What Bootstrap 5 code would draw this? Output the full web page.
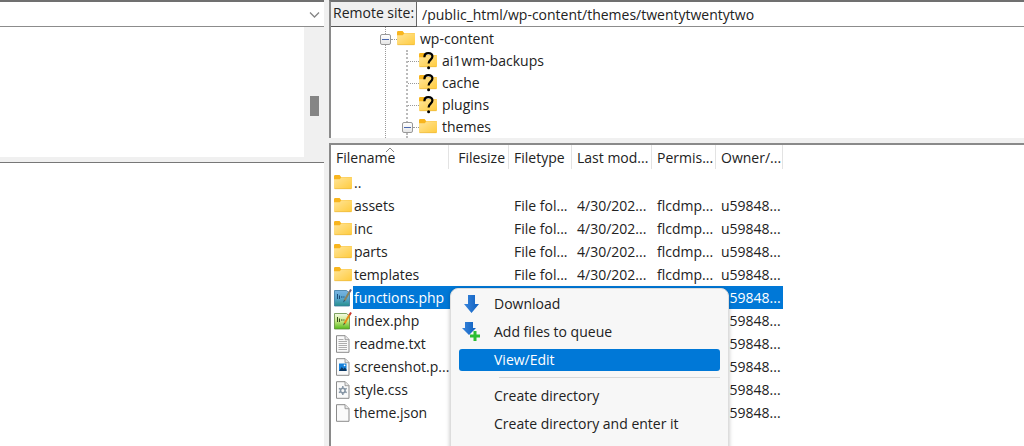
<!DOCTYPE html>
<html lang="en">
<head>
<meta charset="utf-8">
<meta name="viewport" content="width=device-width, initial-scale=1">
<title>Remote files</title>
<link href="https://cdn.jsdelivr.net/npm/bootstrap@5.3.0/dist/css/bootstrap.min.css" rel="stylesheet">
<style>
  body { font-family: "Open Sans", "Noto Sans", sans-serif; font-size: 14px; line-height: 22px; color: #222; background: #f0f0f0; }
  .local-side { flex: 0 0 324px; }
  .remote-side { padding-left: 5px; min-width: 0; }
  .pathbar { height: 27px; border-top: 2px solid #707070; border-bottom: 1px solid #8c8c8c; background: #fff; }
  .pathbar .form-select, .pathbar .form-control { font-size: 14px; line-height: 22px; border: 0; border-radius: 0; color: #222; box-shadow: none; background-color: #fff; }
  .pathbar .form-select { background-position: right 4px center; background-size: 11px 11px;
    background-image: url("data:image/svg+xml,%3csvg xmlns='http://www.w3.org/2000/svg' viewBox='0 0 11 11'%3e%3cpath d='M1 3.5l4.5 4.5L10 3.5' fill='none' stroke='%23858585' stroke-width='1.3'/%3e%3c/svg%3e"); }
  .pathbar label { flex: none; background: #f0f0f0; border-right: 1px solid #666; box-shadow: 0 1px #555; width: 86px; padding-left: 2px; white-space: nowrap; }
  .pathbar .form-control { padding: 0 8px 0 5px; }
  .local-tree { flex: 0 0 130px; }
  .track { width: 20px; background: #f0f0f0; padding-top: 69px; }
  .thumb { width: 9px; height: 20px; background: #858585; }
  .local-list { margin-top: 5px; border-top: 1px solid #777; }
  .remote-pane { border-left: 2px solid #8a8a8a; background: #fff; }
  .remote-tree { flex: 0 0 111px; }
  .remote-list { margin-top: 5px; border-top: 2px solid #8a8a8a; }

  .tree-root { margin-left: 54px; padding-top: 1px; height: 100%; border-left: 1px dotted #999; }
  .tree-sub { margin-left: 20px; border-left: 2px dotted #bbb; }
  .node { height: 22px; }
  .node span { padding-left: 5px; }
  .twig { width: 6px; border-top: 1px dotted #999; }
  .twig-long { width: 11px; }
  .toggle { width: 11px; height: 11px; margin-left: -6px; padding: 0; border: 1px solid #999; border-radius: 2px; background: linear-gradient(#fff, #e6e6e6); }
  .toggle svg { display: block; }
  .ico { width: 18px; height: 18px; flex: none; }

  .files { width: 452px; table-layout: fixed; border-collapse: collapse; }
  .files th { height: 26px; font-weight: 400; padding: 0 0 0 5px; white-space: nowrap;
    background: linear-gradient(#e3e3e3, #e3e3e3) right top / 1px 24px no-repeat; }
  .files td { height: 23px; padding: 0 0 0 5px; white-space: nowrap; }
  .files td:first-child { padding-left: 3px; }
  .files .ico { margin-right: 2px; }
  .sort-mark { left: 54px; top: 2px; }
  .picked td { background: #0078d7; color: #fff; }
  .picked td:first-child { background: linear-gradient(#fff, #fff) left / 22px 100% no-repeat #0078d7; }

  .ctx { left: 119px; top: 143px; bottom: -12px; width: 279px; padding: 4px 8px; gap: 6px; background: #f7f7f7; border: 1px solid #ddd; border-radius: 8px; box-shadow: 0 1px 4px rgba(0,0,0,.25); }
  .ctx button { height: 22px; border: 0; border-radius: 3px; padding: 0; background: none; color: #222; }
  .ctx .slot { width: 35px; height: 20px; padding-left: 2px; }
  .ctx button.active { background: #0078d7; color: #fff; }
  .ctx hr { margin: 0 0 1px 40px; border-top: 1px solid #d8d8d8; opacity: 1; }
</style>
</head>
<body class="vh-100 overflow-hidden">
<svg width="0" height="0" class="position-absolute" aria-hidden="true">
  <defs>
    <linearGradient id="gold" x1="0" y1="0" x2="1" y2="1"><stop offset="0" stop-color="#ffe59a"/><stop offset="1" stop-color="#ffcb3d"/></linearGradient>
    <linearGradient id="lime" x1="0" y1="0" x2="0" y2="1"><stop offset="0" stop-color="#f4fbe6"/><stop offset=".45" stop-color="#cdea8b"/><stop offset="1" stop-color="#55ba1a"/></linearGradient>
    <linearGradient id="teal" x1="0" y1="0" x2="0" y2="1"><stop offset="0" stop-color="#79b4e2"/><stop offset=".5" stop-color="#5aa6cf"/><stop offset="1" stop-color="#26908c"/></linearGradient>
    <linearGradient id="azure" x1="0" y1="0" x2="1" y2="0"><stop offset="0" stop-color="#3a86dc"/><stop offset="1" stop-color="#0d5fc0"/></linearGradient>
  </defs>
  <symbol id="folder" viewBox="0 0 18 18"><path d="M0 2.200q0-1.200 1.200-1.200H5.600l1.500 2H17q1 0 1 1v4H0z" fill="#f8b51e"/><path d="M0 5.200h5.800L7.400 3.300H18V14q0 1-1 1H1q-1 0-1-1z" fill="url(#gold)"/><path d="M.5 14.700h17" stroke="#e9b53a" stroke-width=".6"/></symbol>
  <symbol id="folder-unknown" viewBox="0 0 18 18"><use href="#folder"/><path d="M5.400 5.200C5.400 2 7 1.200 9.300 1.200c2.500 0 4.100 1.300 4.100 3.400 0 3-3.800 3.200-3.800 7" fill="none" stroke="#000" stroke-width="2.200"/><circle cx="9.600" cy="15.800" r="1.500"/></symbol>
  <symbol id="page" viewBox="0 0 18 18"><path d="M2.500.7h8.700l3.800 3.800v12.800H2.500z" fill="#fafafa" stroke="#8b8b8b"/><path d="M11 .7v4h4" fill="#e8e8e8" stroke="#8b8b8b" stroke-width=".8"/></symbol>
  <symbol id="text" viewBox="0 0 18 18"><use href="#page"/><path d="M4.500 4.500h5M4.500 6.500h8.500M4.500 8.500h8.500M4.500 10.500h8.500M4.500 12.500h8.500M4.500 14.500h8.500" stroke="#a5a5a5" stroke-width=".9"/></symbol>
  <symbol id="image" viewBox="0 0 18 18"><use href="#page"/><path d="M5 5.500h7.500v7.500H5z" fill="#1581db"/><path d="M5 13l2.800-4 1.700 2 1.300-1.400 1.700 2V13z" fill="#0c3762"/><circle cx="10.600" cy="7.300" r=".9" fill="#fff"/></symbol>
  <symbol id="gear" viewBox="0 0 18 18"><use href="#page"/><circle cx="8.800" cy="9.500" r="2.300" fill="none" stroke="#8796a5" stroke-width="1.600"/><path d="M8.800 5v2M8.800 12v2M4.900 7.300l1.700 1M11 10.700l1.700 1M4.900 11.700l1.700-1M11 8.300l1.700-1" stroke="#8796a5" stroke-width="1.500"/></symbol>
  <symbol id="code" viewBox="0 0 18 18"><path d="M.5 1.500h12l3 2.500v13H.5z" fill="url(#lime)" stroke="#5f8a3c" stroke-width=".8"/><path d="M3.500 5v5M5.500 6.500v3.500M7 8h1.500M9.300 8h1.200" stroke="#335019" stroke-width="1"/><path d="M15.500 2.800L10.500 11.500" stroke="#e88c19" stroke-width="2"/><path d="M17 .5l-1.500 2.600" stroke="#cb352c" stroke-width="2"/><path d="M10 11l-1 2.400 2.200-1.600z" fill="#3a3a2a"/></symbol>
  <symbol id="code-picked" viewBox="0 0 18 18"><path d="M.5 1.500h12l3 2.500v13H.5z" fill="url(#teal)" stroke="#39789f" stroke-width=".8"/><path d="M3.500 5v5M5.500 6.500v3.500M7 8h1.500M9.300 8h1.200" stroke="#1d4d78" stroke-width="1"/><path d="M15.500 2.800L10.500 11.500" stroke="#8b835a" stroke-width="2"/><path d="M17 .5l-1.500 2.600" stroke="#66577a" stroke-width="2"/><path d="M10 11l-1 2.400 2.200-1.600z" fill="#204762"/></symbol>
</svg>

<div class="d-flex h-100">
  <section class="local-side d-flex flex-column" aria-label="Local site">
    <div class="pathbar d-flex"><select class="form-select h-100 py-0" aria-label="Local path"><option></option></select></div>
    <div class="local-tree d-flex justify-content-end bg-white"><div class="track d-flex justify-content-center"><div class="thumb"></div></div></div>
    <div class="local-list flex-grow-1 bg-white"></div>
  </section>

  <main class="remote-side flex-grow-1 d-flex flex-column">
    <div class="pathbar remote-pane d-flex">
      <label for="remote">Remote site:</label>
      <input id="remote" class="form-control h-100" value="/public_html/wp-content/themes/twentytwentytwo">
    </div>
    <div class="remote-pane remote-tree overflow-hidden">
      <ul class="tree-root list-unstyled mb-0">
        <li>
          <div class="node d-flex align-items-center"><button class="toggle" aria-label="Collapse wp-content"><svg width="9" height="9"><path d="M1 4.500h7" stroke="#4a68b0"/></svg></button><i class="twig"></i><svg class="ico"><use href="#folder"/></svg><span>wp-content</span></div>
          <ul class="tree-sub list-unstyled">
            <li class="node d-flex align-items-center"><i class="twig twig-long"></i><svg class="ico"><use href="#folder-unknown"/></svg><span>ai1wm-backups</span></li>
            <li class="node d-flex align-items-center"><i class="twig twig-long"></i><svg class="ico"><use href="#folder-unknown"/></svg><span>cache</span></li>
            <li class="node d-flex align-items-center"><i class="twig twig-long"></i><svg class="ico"><use href="#folder-unknown"/></svg><span>plugins</span></li>
            <li class="node d-flex align-items-center"><button class="toggle" aria-label="Collapse themes"><svg width="9" height="9"><path d="M1 4.500h7" stroke="#4a68b0"/></svg></button><i class="twig"></i><svg class="ico"><use href="#folder"/></svg><span>themes</span></li>
          </ul>
        </li>
      </ul>
    </div>
    <div class="remote-pane remote-list flex-grow-1 position-relative overflow-hidden">
      <table class="files">
        <colgroup><col style="width:118px"><col style="width:60px"><col style="width:63px"><col style="width:80px"><col style="width:64px"><col style="width:67px"></colgroup>
        <thead><tr><th class="position-relative">Filename<svg class="sort-mark position-absolute" width="10" height="6"><path d="M1 5l4-4 4 4" fill="none" stroke="#888"/></svg></th><th class="text-end pe-1">Filesize</th><th>Filetype</th><th>Last mod...</th><th>Permis...</th><th>Owner/...</th></tr></thead>
        <tbody>
          <tr><td><div class="d-flex align-items-center"><svg class="ico"><use href="#folder"/></svg>..</div></td><td></td><td></td><td></td><td></td><td></td></tr>
          <tr><td><div class="d-flex align-items-center"><svg class="ico"><use href="#folder"/></svg>assets</div></td><td></td><td>File fol...</td><td>4/30/202...</td><td>flcdmp...</td><td>u59848...</td></tr>
          <tr><td><div class="d-flex align-items-center"><svg class="ico"><use href="#folder"/></svg>inc</div></td><td></td><td>File fol...</td><td>4/30/202...</td><td>flcdmp...</td><td>u59848...</td></tr>
          <tr><td><div class="d-flex align-items-center"><svg class="ico"><use href="#folder"/></svg>parts</div></td><td></td><td>File fol...</td><td>4/30/202...</td><td>flcdmp...</td><td>u59848...</td></tr>
          <tr><td><div class="d-flex align-items-center"><svg class="ico"><use href="#folder"/></svg>templates</div></td><td></td><td>File fol...</td><td>4/30/202...</td><td>flcdmp...</td><td>u59848...</td></tr>
          <tr class="picked"><td><div class="d-flex align-items-center"><svg class="ico"><use href="#code-picked"/></svg>functions.php</div></td><td></td><td></td><td></td><td></td><td>u59848...</td></tr>
          <tr><td><div class="d-flex align-items-center"><svg class="ico"><use href="#code"/></svg>index.php</div></td><td></td><td></td><td></td><td></td><td>u59848...</td></tr>
          <tr><td><div class="d-flex align-items-center"><svg class="ico"><use href="#text"/></svg>readme.txt</div></td><td></td><td></td><td></td><td></td><td>u59848...</td></tr>
          <tr><td><div class="d-flex align-items-center"><svg class="ico"><use href="#image"/></svg>screenshot.p...</div></td><td></td><td></td><td></td><td></td><td>u59848...</td></tr>
          <tr><td><div class="d-flex align-items-center"><svg class="ico"><use href="#gear"/></svg>style.css</div></td><td></td><td></td><td></td><td></td><td>u59848...</td></tr>
          <tr><td><div class="d-flex align-items-center"><svg class="ico"><use href="#page"/></svg>theme.json</div></td><td></td><td></td><td></td><td></td><td>u59848...</td></tr>
        </tbody>
      </table>
      <div class="ctx position-absolute d-flex flex-column" role="menu">
        <button class="d-flex align-items-center" role="menuitem"><span class="slot d-flex"><svg width="20" height="20"><path d="M7 1h7v9h4l-7.500 9L3 10h4z" fill="url(#azure)"/></svg></span>Download</button>
        <button class="d-flex align-items-center" role="menuitem"><span class="slot d-flex"><svg width="20" height="20"><path d="M4 0h8v6h3L8 13 1 6h3z" fill="url(#azure)"/><path d="M12.500 9h3v3.500H19v3h-3.500V19h-3v-3.500H9v-3h3.500z" fill="#2bbd33"/></svg></span>Add files to queue</button>
        <button class="active d-flex align-items-center" role="menuitem"><span class="slot"></span>View/Edit</button>
        <hr>
        <button class="d-flex align-items-center" role="menuitem"><span class="slot"></span>Create directory</button>
        <button class="d-flex align-items-center" role="menuitem"><span class="slot"></span>Create directory and enter it</button>
      </div>
    </div>
  </main>
</div>
<script src="https://cdn.jsdelivr.net/npm/bootstrap@5.3.0/dist/js/bootstrap.bundle.min.js"></script>
</body>
</html>
